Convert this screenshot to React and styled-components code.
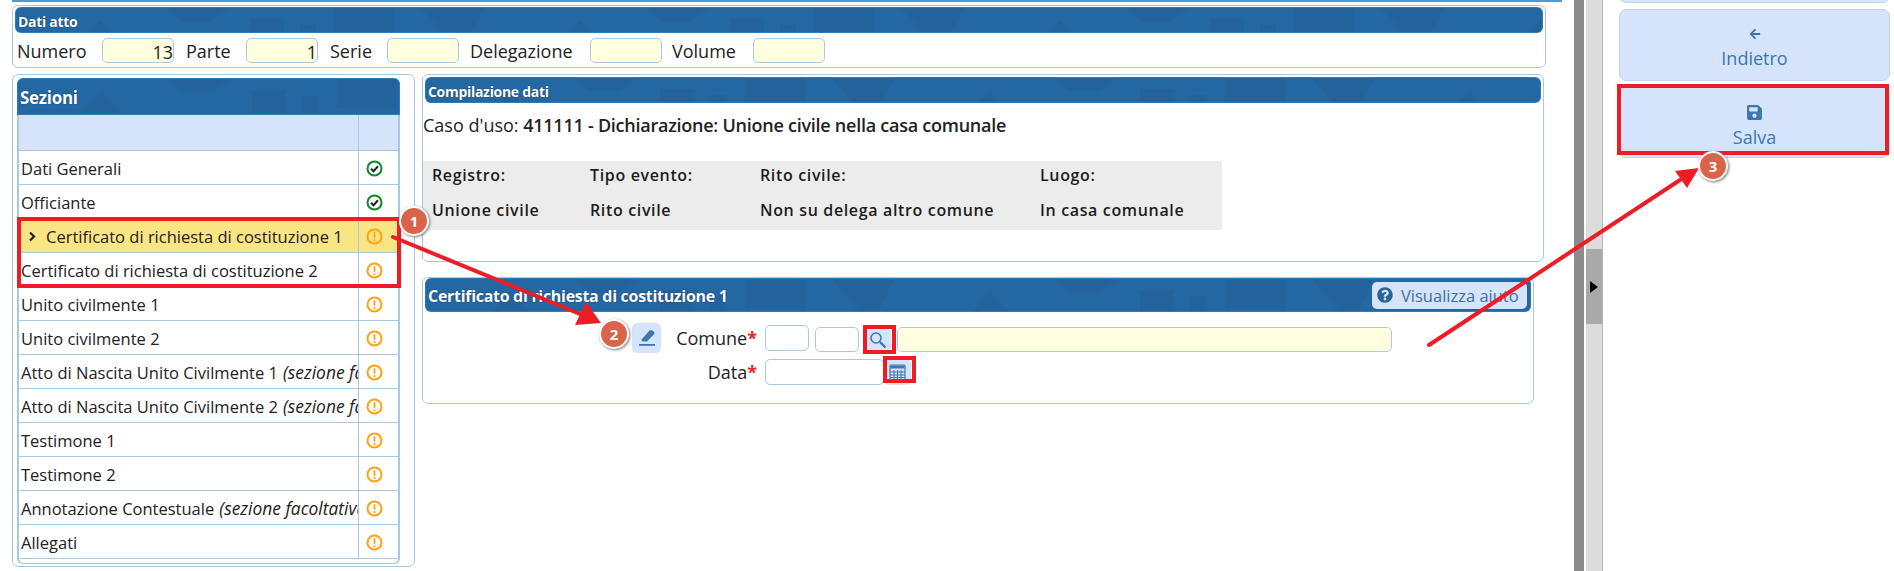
import React from "react";
import styled, { createGlobalStyle } from "styled-components";
import { FaSave, FaArrowLeft, FaQuestionCircle } from "react-icons/fa";

const texture = encodeURIComponent(`<svg xmlns="http://www.w3.org/2000/svg" width="480" height="40"><g fill="#27507f" fill-opacity=".22"><polygon points="60,40 85,14 110,40"/><polygon points="150,0 215,0 195,14 165,14"/><rect x="235" y="12" width="34" height="28"/><rect x="285" y="18" width="16" height="22"/><rect x="320" y="0" width="60" height="30"/><polygon points="405,0 470,0 450,40 440,40"/></g></svg>`);

const GlobalStyle = createGlobalStyle`
  html, body { margin: 0; padding: 0; background: #fff; }
  body { font-family: "Open Sans", "Liberation Sans", sans-serif; color: #222; overflow: hidden; }
`;

const Page = styled.div`
  position: relative;
  display: flex;
  width: 1894px;
  height: 571px;
  overflow: hidden;
`;
const Main = styled.div`
  width: 1562px;
  padding-left: 12px;
  box-sizing: border-box;
  flex: none;
`;
const TopLine = styled.div`
  height: 2px;
  margin-bottom: 3px;
  background: #4d9ad8;
`;
const Panel = styled.section`
  box-sizing: border-box;
  width: ${p => p.$w}px;
  height: ${p => p.$h}px;
  border: 1px solid #a9c9e2;
  border-radius: 6px;
  background: #fff;
  padding: ${p => p.$pad || "1px 2px"};
`;
const Header = styled.div`
  display: flex;
  align-items: center;
  justify-content: space-between;
  box-sizing: border-box;
  height: ${p => p.$h || 26}px;
  padding: 2px 4px 0 3px;
  border-radius: 6px 6px ${p => p.$square ? "0 0" : "6px 6px"};
  background: #2367a3 url("data:image/svg+xml,${texture}");
  box-shadow: inset 0 0 0 1px #2e7bbb;
  color: #fff;
  font-size: ${p => p.$size || 14}px;
  font-weight: 700;
  letter-spacing: -0.3px;
  text-shadow: 0 0 1px #123;
`;
const FieldRow = styled.div`
  display: flex;
  align-items: center;
  height: 33px;
  margin-top: 1px;
  padding-left: 2px;
  font-size: 18px;
`;
const FieldLabel = styled.span`
  width: ${p => p.$w}px;
  flex: none;
`;
const Input = styled.div`
  box-sizing: border-box;
  flex: none;
  width: ${p => p.$w}px;
  height: ${p => p.$h || 25}px;
  border: 1px solid #a9c9e2;
  border-radius: 5px;
  background: ${p => p.$plain ? "#fff" : "#ffffe0"};
  text-align: right;
  font-size: 18px;
  line-height: 27px;
  margin-right: ${p => p.$mr || 0}px;
  margin-top: ${p => p.$mt || 0}px;
`;
const Columns = styled.div`
  display: flex;
  gap: 7px;
  margin-top: 6px;
`;
const RightCol = styled.div`
  display: flex;
  flex-direction: column;
  gap: 15px;
`;
const Table = styled.div`
  height: 448px;
  border-left: 2px solid #a9c9e2;
  border-right: 2px solid #a9c9e2;
  border-bottom: 1px solid #a9c9e2;
  border-radius: 0 0 6px 6px;
`;
const Row = styled.div`
  display: grid;
  grid-template-columns: 340px 1fr;
  box-sizing: border-box;
  height: 34px;
  border-top: 1px solid #a9c9e2;
  background: ${p => p.$active ? "#fae585" : "#fff"};
  font-size: 16.5px;
  &:last-child { border-bottom: 1px solid #a9c9e2; height: 35px; }
`;
const SubHead = styled(Row)`
  height: 35px;
  background: #d6e4fb;
  border-top: none;
`;
const Name = styled.div`
  display: flex;
  align-items: center;
  gap: 9px;
  padding: 1px 0 0 ${p => p.$active ? "9px" : "2px"};
  border-right: 1px solid #a9c9e2;
  white-space: nowrap;
  overflow: hidden;
  em { margin-left: 5px; font-size: 17.4px; }
`;
const State = styled.div`
  display: flex;
  align-items: center;
  justify-content: center;
  margin-left: -8px;
  padding-top: 1px;
`;
const CaseLine = styled.div`
  margin: 10px 0 0 -2px;
  height: 48px;
  font-size: 18px;
  line-height: 24px;
  b { font-weight: 600; letter-spacing: -0.25px; }
`;
const Summary = styled.div`
  display: grid;
  grid-template-columns: 158px 170px 280px 1fr;
  grid-template-rows: 28px 41px;
  align-items: center;
  box-sizing: border-box;
  width: 799px;
  height: 69px;
  margin-left: -2px;
  padding-left: 9px;
  background: #ececec;
  font-size: 16px;
  font-weight: 600;
  letter-spacing: 0.65px;
  color: #1c1c1c;
`;
const HelpButton = styled.div`
  display: flex;
  align-items: center;
  gap: 8px;
  box-sizing: border-box;
  height: 27px;
  width: 155px;
  margin-top: -2px;
  padding-left: 5px;
  border-radius: 5px;
  background: #d6e4fb;
  color: #3f6f9f;
  font-size: 16.5px;
  font-weight: 400;
  letter-spacing: 0;
  text-shadow: none;
`;
const FormRow = styled.div`
  display: flex;
  align-items: flex-start;
  height: ${p => p.$h}px;
  padding-left: ${p => p.$left}px;
`;
const IconButton = styled.div`
  box-sizing: border-box;
  flex: none;
  display: flex;
  align-items: center;
  justify-content: center;
  width: ${p => p.$w}px;
  height: ${p => p.$h}px;
  margin-right: ${p => p.$mr || 0}px;
  margin-top: ${p => p.$mt || 0}px;
  border-radius: 5px;
  background: #d6e4fb;
  color: #3a78ad;
`;
const FormLabel = styled.div`
  width: ${p => p.$w}px;
  flex: none;
  margin-top: ${p => p.$mt || 0}px;
  text-align: right;
  font-size: 18px;
  line-height: 26px;
  padding-right: 8px;
  box-sizing: border-box;
  i { color: #e22; font-style: normal; font-weight: 700; }
`;
const Splitter = styled.div`
  flex: none;
  display: flex;
  width: 29px;
  margin-left: 12px;
  height: 100%;
`;
const Strip = styled.div`
  width: 10px;
  background: #8c8c8c;
  margin-right: 2px;
`;
const Track = styled.div`
  position: relative;
  width: 16px;
  background: #dcdcdc;
  border-right: 1px solid #b5b5b5;
`;
const Handle = styled.div`
  position: absolute;
  top: 249px;
  left: 0;
  width: 100%;
  height: 75px;
  background: #a9a9a9;
  display: flex;
  align-items: center;
  justify-content: center;
  &::after {
    content: "";
    border-left: 8px solid #000;
    border-top: 6px solid transparent;
    border-bottom: 6px solid transparent;
  }
`;
const Side = styled.aside`
  flex: none;
  display: flex;
  flex-direction: column;
  gap: 6px;
  box-sizing: border-box;
  width: 288px;
  margin-top: -69px;
  padding-left: 16px;
`;
const SideButton = styled.div`
  box-sizing: border-box;
  flex: none;
  width: 271px;
  height: ${p => p.$h || 72}px;
  padding-top: 8px;
  display: flex;
  flex-direction: column;
  align-items: center;
  justify-content: center;
  gap: ${p => p.$gap || 0}px;
  border: 1px solid #bfd6ee;
  border-radius: 7px;
  background: #d6e4fb;
  color: #3a78ad;
  font-size: 18px;
`;
const Overlay = styled.svg`
  position: absolute;
  inset: 0;
  width: 1894px;
  height: 571px;
  pointer-events: none;
`;
const Badge = styled.div`
  position: absolute;
  left: ${p => p.$x - 15}px;
  top: ${p => p.$y - 15}px;
  box-sizing: border-box;
  width: 30px;
  height: 30px;
  border: 2px solid #fff;
  border-radius: 50%;
  background: #d9644a;
  box-shadow: 1px 1px 3px #777;
  color: #fff;
  font: 700 15px/26px "Open Sans", sans-serif;
  text-align: center;
`;
const Mark = styled.div`
  position: absolute;
  left: ${p => p.$x}px;
  top: ${p => p.$y}px;
  box-sizing: border-box;
  width: ${p => p.$w}px;
  height: ${p => p.$h}px;
  border: 4px solid #ee1c25;
`;

const Warn = () => (
  <svg width="17" height="17" viewBox="0 0 17 17">
    <circle cx="8.5" cy="8.5" r="7" fill="none" stroke="#fca311" strokeWidth="2" />
    <rect x="7.6" y="4" width="1.8" height="6" rx=".9" fill="#fca311" />
    <circle cx="8.5" cy="12.2" r="1.1" fill="#fca311" />
  </svg>
);
const Ok = () => (
  <svg width="17" height="17" viewBox="0 0 17 17">
    <circle cx="8.5" cy="8.5" r="7" fill="none" stroke="#12862b" strokeWidth="2" />
    <path d="M5 8.7l2.5 2.5L12 6.3" fill="none" stroke="#222" strokeWidth="2" />
  </svg>
);
const Chevron = () => (
  <svg width="9" height="11" viewBox="0 0 9 11">
    <path d="M2 1.5l4 4-4 4" fill="none" stroke="#222" strokeWidth="2.2" />
  </svg>
);
const Pencil = () => (
  <svg width="20" height="20" viewBox="0 0 20 20" fill="#3a78ad">
    <path d="M12.5 2.5c1-.8 2-.8 2.8-.1l1.6 1.4c.8.7.8 1.7.1 2.5l-7 7.2H5.8l-1.6-1.6z" />
    <rect x="2" y="16" width="16" height="1.8" />
  </svg>
);
const Magnifier = () => (
  <svg width="18" height="18" viewBox="0 0 18 18" fill="none" stroke="#3a78ad">
    <circle cx="7" cy="7" r="5" strokeWidth="1.6" />
    <path d="M11 11l5.5 5.5" strokeWidth="2.4" />
  </svg>
);
const Calc = () => (
  <svg width="17" height="17" viewBox="0 0 17 17" fill="none" stroke="#3a78ad">
    <rect x="1" y="1" width="15" height="15" rx="1" strokeWidth="1.2" />
    <rect x="1.5" y="1.5" width="14" height="3" fill="#3a78ad" stroke="none" />
    <path d="M1 8h15M1 11h15M1 13.5h15M5 6v10M8.5 6v10M12 6v10" strokeWidth="1" />
  </svg>
);

const sections = [
  { name: "Dati Generali", ok: true },
  { name: "Officiante", ok: true },
  { name: "Certificato di richiesta di costituzione 1", active: true },
  { name: "Certificato di richiesta di costituzione 2" },
  { name: "Unito civilmente 1" },
  { name: "Unito civilmente 2" },
  { name: "Atto di Nascita Unito Civilmente 1", note: "(sezione facoltativa)" },
  { name: "Atto di Nascita Unito Civilmente 2", note: "(sezione facoltativa)" },
  { name: "Testimone 1" },
  { name: "Testimone 2" },
  { name: "Annotazione Contestuale", note: "(sezione facoltativa)" },
  { name: "Allegati" },
];

const summary = ["Registro:", "Tipo evento:", "Rito civile:", "Luogo:", "Unione civile", "Rito civile", "Non su delega altro comune", "In casa comunale"];

export default function App() {
  return (
    <Page>
      <GlobalStyle />
      <Main>
        <TopLine />
        <Panel $w={1534} $h={63}>
          <Header>Dati atto</Header>
          <FieldRow>
            <FieldLabel $w={85}>Numero</FieldLabel>
            <Input $w={72} $mr={12}>13</Input>
            <FieldLabel $w={60}>Parte</FieldLabel>
            <Input $w={72} $mr={12}>1</Input>
            <FieldLabel $w={57}>Serie</FieldLabel>
            <Input $w={72} $mr={11} />
            <FieldLabel $w={120}>Delegazione</FieldLabel>
            <Input $w={72} $mr={10} />
            <FieldLabel $w={81}>Volume</FieldLabel>
            <Input $w={72} />
          </FieldRow>
        </Panel>
        <Columns>
          <Panel $w={403} $h={493} $pad="3px 14px 0 4px">
            <Header $h={37} $size={17} $square>Sezioni</Header>
            <Table>
              <SubHead><Name /><State /></SubHead>
              {sections.map(s => (
                <Row key={s.name} $active={s.active}>
                  <Name $active={s.active}>
                    {s.active && <Chevron />}
                    <span>{s.name}{s.note && <em>{s.note}</em>}</span>
                  </Name>
                  <State>{s.ok ? <Ok /> : <Warn />}</State>
                </Row>
              ))}
            </Table>
          </Panel>
          <RightCol>
            <Panel $w={1122} $h={188} $pad="2px 2px">
              <Header>Compilazione dati</Header>
              <CaseLine>Caso d'uso: <b>411111 - Dichiarazione: Unione civile nella casa comunale</b></CaseLine>
              <Summary>
                {summary.map(t => <div key={t}>{t}</div>)}
              </Summary>
            </Panel>
            <Panel $w={1112} $h={127} $pad="0 2px">
              <Header $h={34} $size={16}>
                Certificato di richiesta di costituzione 1
                <HelpButton><FaQuestionCircle size={16} color="#2a6496" />Visualizza aiuto</HelpButton>
              </Header>
              <FormRow $h={35} $left={207}>
                <IconButton $w={29} $h={30} $mr={5} $mt={11}><Pencil /></IconButton>
                <FormLabel $w={99} $mt={13}>Comune<i>*</i></FormLabel>
                <Input $plain $w={44} $h={26} $mr={6} $mt={13} />
                <Input $plain $w={44} $mr={5} $mt={15} />
                <IconButton $w={27} $h={25} $mr={6} $mt={15}><Magnifier /></IconButton>
                <Input $w={495} $mt={15} />
              </FormRow>
              <FormRow $h={30} $left={207}>
                <FormLabel $w={133} $mt={12}>Data<i>*</i></FormLabel>
                <Input $plain $w={119} $h={26} $mt={12} />
                <IconButton $w={27} $h={26} $mt={12}><Calc /></IconButton>
              </FormRow>
            </Panel>
          </RightCol>
        </Columns>
      </Main>
      <Splitter>
        <Strip />
        <Track><Handle /></Track>
      </Splitter>
      <Side>
        <SideButton />
        <SideButton $gap={6}><FaArrowLeft size={12} />Indietro</SideButton>
        <SideButton $h={71} $gap={4}><FaSave size={17} />Salva</SideButton>
      </Side>

      <Overlay viewBox="0 0 1894 571">
        <g stroke="#ee1c25" strokeWidth="4" strokeLinecap="round" fill="#ee1c25">
          <line x1="393" y1="237" x2="585" y2="316" />
          <line x1="1429" y1="345" x2="1680" y2="180" />
        </g>
        <polygon points="601,323 575,325 586,302" fill="#ee1c25" />
        <polygon points="1699,168 1687,188 1675,171" fill="#ee1c25" />
      </Overlay>
      <Mark $x={17} $y={217} $w={384} $h={71} />
      <Mark $x={863} $y={325} $w={33} $h={29} />
      <Mark $x={883} $y={356} $w={33} $h={27} />
      <Mark $x={1617} $y={84} $w={272} $h={71} />
      <Badge $x={414} $y={221}>1</Badge>
      <Badge $x={614} $y={334}>2</Badge>
      <Badge $x={1713} $y={166}>3</Badge>
    </Page>
  );
}
